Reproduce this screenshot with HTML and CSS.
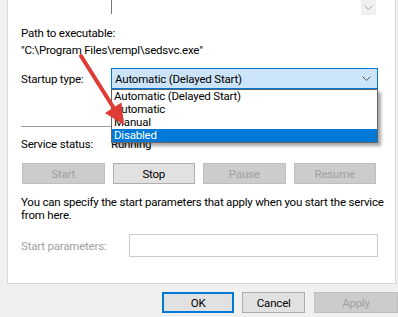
FILE: index.html
```html
<!DOCTYPE html>
<html>
<head>
<meta charset="utf-8">
<link rel="stylesheet" href="styles.css">
</head>
<body>
<div class="dialog">
  <div class="panel">
    <div class="desc">
      <span class="scroll-btn"><svg width="9" height="5" viewBox="0 0 9 5"><path d="M0.5 0.5 L4.5 4.5 L8.5 0.5" fill="none" stroke="#a6a6a6" stroke-width="1"/></svg></span>
    </div>
    <div class="line label-top">Path to executable:</div>
    <div class="line path">"C:\Program Files\rempl\sedsvc.exe"</div>
    <div class="row startup">
      <span class="row-label">Startup type:</span>
      <div class="combo">
        <span class="combo-text">Automatic (Delayed Start)</span>
        <svg class="combo-chev" width="9" height="5" viewBox="0 0 9 5"><path d="M0.5 0.5 L4.5 4.5 L8.5 0.5" fill="none" stroke="#5a5a5a" stroke-width="1"/></svg>
        <ul class="dropdown">
          <li>Automatic (Delayed Start)</li>
          <li>Automatic</li>
          <li>Manual</li>
          <li class="selected">Disabled</li>
        </ul>
      </div>
    </div>
    <div class="sep"></div>
    <div class="row status">
      <span class="row-label">Service status:</span>
      <span>Running</span>
    </div>
    <div class="svc-buttons">
      <div class="btn disabled">Start</div>
      <div class="btn">Stop</div>
      <div class="btn disabled">Pause</div>
      <div class="btn disabled">Resume</div>
    </div>
    <p class="note">You can specify the start parameters that apply when you start the service<br>from here.</p>
    <div class="row params">
      <span class="row-label wide muted">Start parameters:</span>
      <div class="input"></div>
    </div>
  </div>
  <div class="footer">
    <div class="btn default ok">OK</div>
    <div class="btn cancel">Cancel</div>
    <div class="btn disabled apply">Apply</div>
  </div>
</div>
<svg class="arrow" width="398" height="317" viewBox="0 0 398 317">
  <line x1="81" y1="56" x2="115" y2="110" stroke="#de3b34" stroke-width="4" stroke-linecap="round"/>
  <polygon points="124,125 121.5,102.5 105,113" fill="#de3b34"/>
</svg>
</body>
</html>
```
FILE: styles.css
```css
* { box-sizing: border-box; }
html, body { margin: 0; padding: 0; }
body {
  width: 398px;
  height: 317px;
  overflow: hidden;
  position: relative;
  background: #f0f0f0;
  font-family: Roboto, "Liberation Sans", sans-serif;
  font-size: 11.5px;
  letter-spacing: -0.2px;
  color: #000;
}
.panel {
  margin-left: 7px;
  width: 389px;
  height: 284px;
  background: #fff;
  border: 1px solid #d9d9d9;
  border-top: none;
  padding: 0 17px 0 13px;
}
.desc {
  margin-left: 90px;
  height: 14px;
  border-left: 1px solid #7a7a7a;
  display: flex;
  justify-content: flex-end;
}
.scroll-btn {
  width: 15px;
  height: 15px;
  margin-right: 2px;
  background: #f0f0f0;
  display: flex;
  align-items: center;
  justify-content: center;
}
.line { line-height: 16px; white-space: nowrap; }
.label-top { margin-top: 11px; }
.path { margin-top: 1px; }
.row { display: flex; align-items: center; }
.row-label { width: 90px; flex: none; line-height: 16px; }
.row-label.wide { width: 108px; }
.muted { color: #a0a0a0; }
.startup { margin-top: 10px; }
.combo {
  position: relative;
  width: 267px;
  height: 21px;
  border: 1px solid #0078d7;
  background: #cce4f7;
  display: flex;
  align-items: center;
  padding-left: 3px;
}
.combo-text { flex: 1; }
.combo-chev { margin-right: 6px; }
.dropdown {
  position: absolute;
  top: 20px;
  left: -1px;
  width: 267px;
  margin: 0;
  padding: 0;
  list-style: none;
  background: #fff;
  border: 1px solid #646464;
  box-shadow: 3px 3px 3px rgba(0, 0, 0, 0.35);
  z-index: 2;
}
.dropdown li {
  height: 13px;
  line-height: 13px;
  padding-left: 2px;
}
.dropdown li.selected { background: #0078d7; color: #fff; }
.sep {
  margin-top: 37px;
  height: 1px;
  background: #a0a0a0;
}
.status { margin-top: 9px; }
.svc-buttons {
  margin-top: 11px;
  display: grid;
  grid-template-columns: repeat(4, 1fr);
  column-gap: 8px;
  padding-left: 1px;
  padding-right: 2px;
}
.btn {
  height: 21px;
  border: 1px solid #adadad;
  background: #e1e1e1;
  display: flex;
  align-items: center;
  justify-content: center;
}
.btn.disabled { background: #cccccc; border-color: #bfbfbf; color: #a0a0a0; }
.note {
  margin: 12px 0 0;
  line-height: 13px;
  white-space: nowrap;
}
.params { margin-top: 12px; }
.input {
  flex: 1;
  height: 23px;
  border: 1px solid #cccccc;
  background: #fff;
}
.footer {
  margin-top: 8px;
  padding-left: 162px;
  display: flex;
}
.footer .btn { height: 21px; }
.ok { width: 73px; border: 2px solid #0078d7; }
.cancel { width: 63px; margin-left: 8px; }
.apply { width: 84px; margin-left: 9px; flex: none; }
.arrow {
  position: absolute;
  left: 0;
  top: 0;
  pointer-events: none;
  z-index: 5;
}
```
